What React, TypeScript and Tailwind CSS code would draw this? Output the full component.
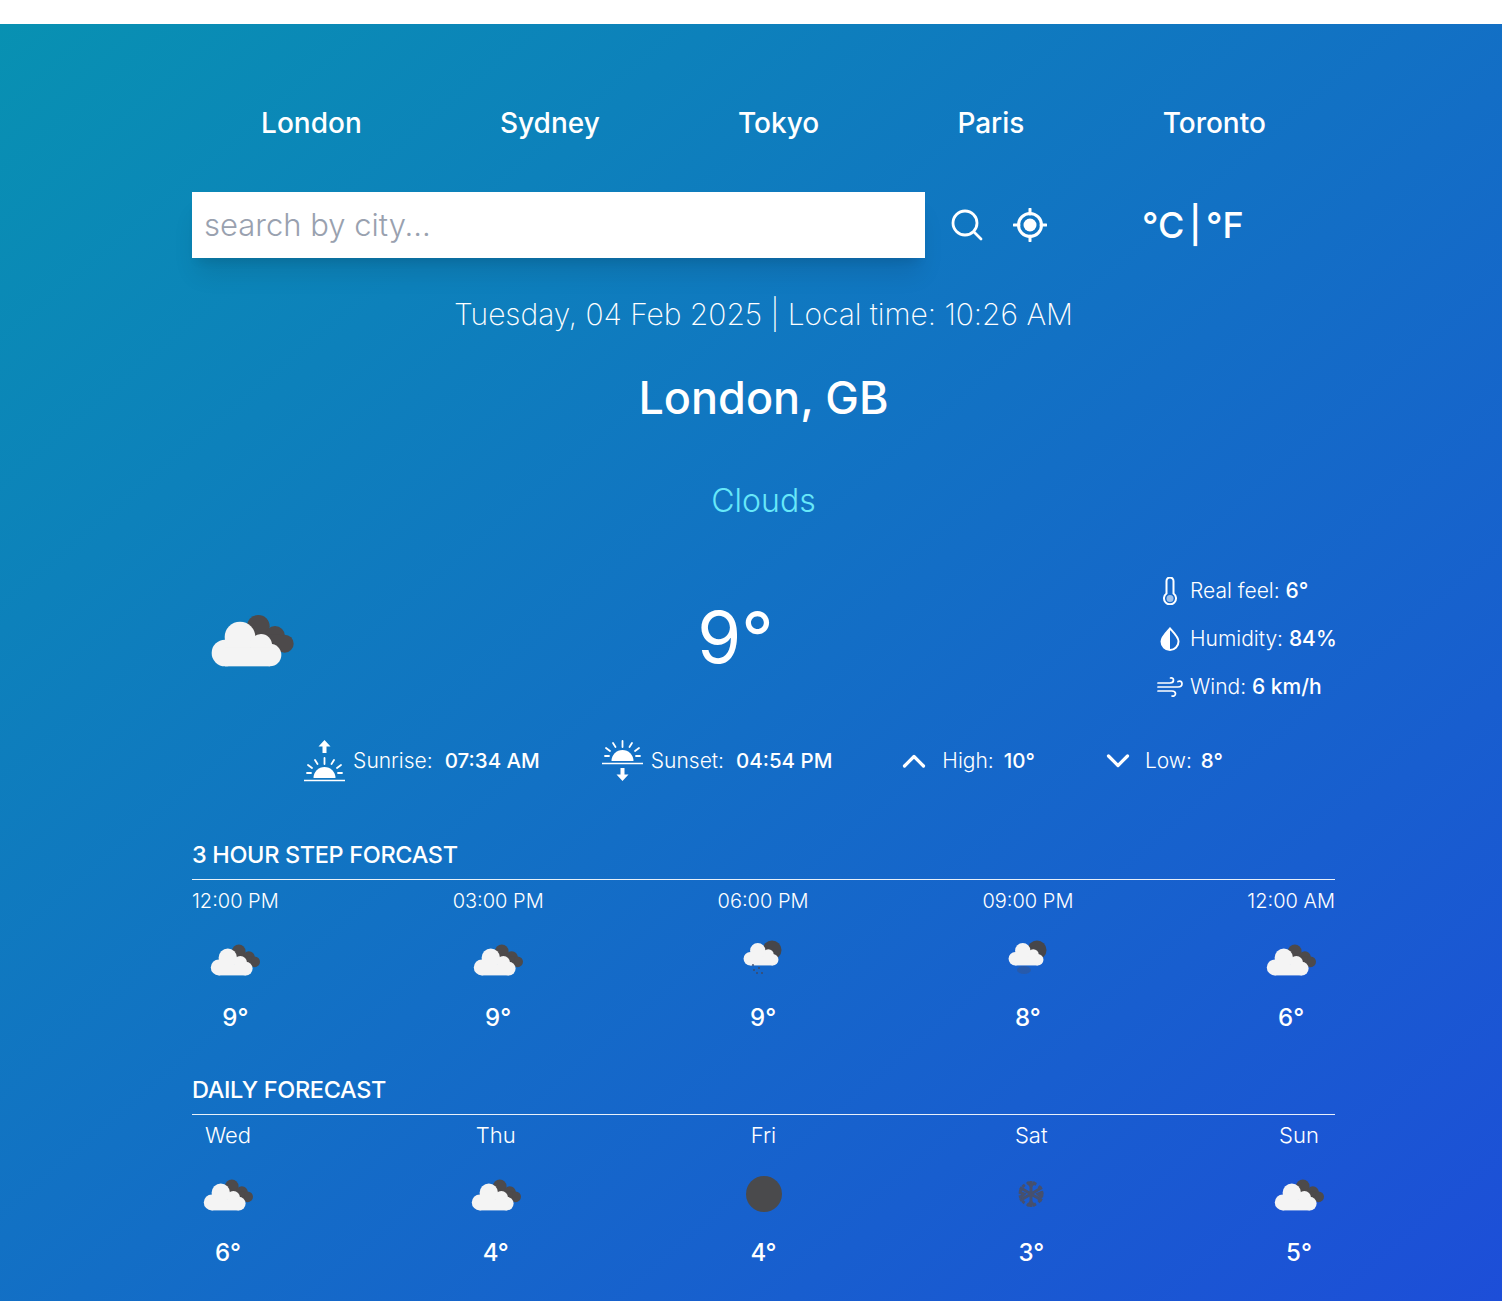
import React from "react";

const hourly = [
  { label: "12:00 PM", temp: "9°", icon: "clouds" },
  { label: "03:00 PM", temp: "9°", icon: "clouds" },
  { label: "06:00 PM", temp: "9°", icon: "snowNight" },
  { label: "09:00 PM", temp: "8°", icon: "rainNight" },
  { label: "12:00 AM", temp: "6°", icon: "clouds" },
];

const daily = [
  { label: "Wed", temp: "6°", icon: "clouds" },
  { label: "Thu", temp: "4°", icon: "clouds" },
  { label: "Fri", temp: "4°", icon: "disc" },
  { label: "Sat", temp: "3°", icon: "flake" },
  { label: "Sun", temp: "5°", icon: "clouds" },
];

const cities = ["London", "Sydney", "Tokyo", "Paris", "Toronto"];

function WhiteCloud() {
  return (
    <g fill="#f4f4f4">
      <circle cx="150" cy="138" r="46" />
      <circle cx="105" cy="186" r="40" />
      <circle cx="213" cy="162" r="33" />
      <circle cx="240" cy="192" r="34" />
      <rect x="105" y="170" width="135" height="56" />
    </g>
  );
}

function WeatherIcon({ kind, size }: { kind: string; size: number }) {
  if (kind === "disc") {
    return (
      <svg width={size} height={size} viewBox="0 0 72 72">
        <circle cx="36" cy="36" r="18" fill="#4a4a4c" />
      </svg>
    );
  }
  if (kind === "flake") {
    return (
      <svg width={size} height={size} viewBox="0 0 72 72" fill="none" stroke="#46506e" strokeWidth="3">
        <path d="M36 23v26M25 29.500l22 13M25 42.500l22-13" />
        <path d="M32 24l4 4 4-4M32 48l4-4 4 4M24 34l5 2-4 4M48 34l-5 2 4 4" />
        <circle cx="36" cy="36" r="11" strokeDasharray="3 3" />
      </svg>
    );
  }
  if (kind === "snowNight" || kind === "rainNight") {
    return (
      <svg width={size} height={size} viewBox="0 0 72 72">
        <circle cx="45" cy="27" r="9.500" fill="#46464a" />
        <g transform="translate(5.700 4.700) scale(0.167)">
          <WhiteCloud />
        </g>
        {kind === "snowNight" ? (
          <g fill="#3d4a6a">
            <circle cx="26" cy="42" r="0.900" />
            <circle cx="27" cy="47" r="1" />
            <circle cx="32" cy="45" r="1" />
            <circle cx="30" cy="50" r="1" />
            <circle cx="35" cy="50" r="1" />
          </g>
        ) : (
          <ellipse cx="32" cy="47" rx="7" ry="4" fill="#35558f" opacity="0.55" />
        )}
      </svg>
    );
  }
  return (
    <svg width={size} height={size} viewBox="6 -36 360 360">
      <g fill="#4d4a4b">
        <circle cx="205" cy="106" r="34" />
        <circle cx="255" cy="135" r="30" />
        <circle cx="284" cy="158" r="27" />
        <rect x="200" y="130" width="70" height="50" />
      </g>
      <WhiteCloud />
    </svg>
  );
}

function Thermometer() {
  return (
    <svg width="18" height="28" viewBox="0 0 18 28" fill="none" stroke="white" strokeWidth="2">
      <path d="M5.500 4a3.500 3.500 0 0 1 7 0v12.500a6 6 0 1 1-7 0z" />
      <circle cx="9" cy="21.500" r="3.500" fill="white" opacity="0.6" stroke="none" />
    </svg>
  );
}

function Droplet() {
  return (
    <svg width="20" height="24" viewBox="0 0 20 24">
      <path d="M10 1.500C6 6 1.500 10 1.500 14.500a8.500 8.500 0 0 0 17 0C18.500 10 14 6 10 1.500z" fill="none" stroke="white" strokeWidth="2" />
      <path d="M10 1.500C6 6 1.500 10 1.500 14.500a8.500 8.500 0 0 0 8.500 8.500z" fill="white" />
    </svg>
  );
}

function Wind() {
  return (
    <svg width="26" height="22" viewBox="0 0 26 22" fill="none" stroke="white" strokeWidth="1.700" strokeLinecap="round">
      <path d="M1 7h12c2.500 0 3.500-1.500 3.500-3S15 1.500 13.500 2" />
      <path d="M1 11h20c2.500 0 4-1.500 4-3.500S23 4.500 21 5.500" />
      <path d="M1 15h14c2 0 3.500 1 3.500 2.800S16.500 20.500 15 20" />
    </svg>
  );
}

function Sunrise() {
  return (
    <svg width="41" height="42" viewBox="0 0 41 42" className="shrink-0">
      <path d="M20.500 0l-6 6.500h4v6.500h4v-6.500h4z" fill="white" />
      <path d="M9.500 38a11 11 0 0 1 22 0z" fill="white" />
      <path d="M0 40.500h41" stroke="white" strokeWidth="1.600" />
      <path d="M20.500 18v6M11 20l2.500 4M30 20l-2.500 4M4 25l4 3M37 25l-4 3M3 33h4M34 33h4" stroke="white" strokeWidth="1.800" strokeLinecap="round" fill="none" />
    </svg>
  );
}

function Sunset() {
  return (
    <svg width="41" height="42" viewBox="0 0 41 42" className="shrink-0">
      <path d="M9.500 21a11 11 0 0 1 22 0z" fill="white" />
      <path d="M0 23.500h41" stroke="white" strokeWidth="1.600" />
      <path d="M20.500 1v6M11 3l2.500 4M30 3l-2.500 4M4 8l4 3M37 8l-4 3M3 16h4M34 16h4" stroke="white" strokeWidth="1.800" strokeLinecap="round" fill="none" />
      <path d="M20.500 41l-6-6.500h4v-6.500h4v6.500h4z" fill="white" />
    </svg>
  );
}

function Chevron({ up }: { up?: boolean }) {
  return (
    <svg width="24" height="16" viewBox="0 0 24 16" fill="none" stroke="white" strokeWidth="3.200" strokeLinecap="round" strokeLinejoin="round">
      <path d={up ? "M2.500 13L12 3.500 21.500 13" : "M2.500 3L12 12.500 21.500 3"} />
    </svg>
  );
}

function Forecast({
  title,
  items,
  labelClass,
}: {
  title: string;
  items: { label: string; temp: string; icon: string }[];
  labelClass: string;
}) {
  return (
    <section>
      <h2 className="text-[23.500px] leading-[32px] font-medium uppercase text-white tracking-[-0.35px]">{title}</h2>
      <hr className="mt-2 border-white/90" />
      <div className="flex justify-between mt-[4px]">
        {items.map((item) => (
          <div key={item.label} className="flex flex-col items-center min-w-[72px]">
            <p className={`${labelClass} leading-[32px] font-light text-white whitespace-nowrap`}>{item.label}</p>
            <div className="mt-[7px]">
              <WeatherIcon kind={item.icon} size={72} />
            </div>
            <p className="text-[24px] leading-[32px] font-medium text-white mt-[7px]">{item.temp}</p>
          </div>
        ))}
      </div>
    </section>
  );
}

export default function App() {
  return (
    <div className="pt-6 bg-white font-['Inter',sans-serif]">
      <main className="h-[1277px] overflow-hidden bg-linear-to-br/srgb from-[#0891b2] to-[#1d4ed8] pl-[192px] pr-[167px] pt-[79px]">
        <nav className="flex justify-around">
          {cities.map((city) => (
            <button key={city} className="text-white text-[28px] leading-[40px] font-medium">
              {city}
            </button>
          ))}
        </nav>

        <div className="flex mt-[49px] items-center">
          <div className="w-[733px] h-[66px] shrink-0 bg-white shadow-xl flex items-center px-3">
            <input
              placeholder="search by city..."
              className="w-full outline-none text-[31px] font-light text-gray-800 placeholder:text-gray-400"
            />
          </div>
          <div className="flex items-center gap-[30px] ml-[26px]">
            <svg width="32" height="32" viewBox="0 0 32 32" fill="none" stroke="white" strokeWidth="2.800" strokeLinecap="round">
              <circle cx="14" cy="14" r="12" />
              <path d="M23 23l7 7" />
            </svg>
            <svg width="34" height="34" viewBox="0 0 34 34" fill="none" stroke="white">
              <circle cx="17" cy="17" r="11.500" strokeWidth="3" />
              <circle cx="17" cy="17" r="6.500" fill="white" stroke="none" />
              <path d="M17 1v5M17 28v5M1 17h5M28 17h5" strokeWidth="3" strokeLinecap="round" />
            </svg>
          </div>
          <p className="text-white text-[36px] font-medium ml-[95px] whitespace-nowrap [word-spacing:-5px]">°C | °F</p>
        </div>

        <p className="text-center text-white text-[30px] leading-[40px] font-extralight mt-[36px] tracking-[-0.05px]">
          Tuesday, 04 Feb 2025 | Local time: 10:26 AM
        </p>
        <h1 className="text-center text-white text-[45px] leading-[56px] font-medium mt-[36px]">London, GB</h1>
        <p className="text-center text-[#67e8f9] text-[32px] leading-[40px] font-light mt-[55px]">Clouds</p>

        <div className="flex justify-between items-center mt-[53px]">
          <WeatherIcon kind="clouds" size={120} />
          <p className="text-white text-[71px] leading-[80px] font-normal ml-[2px] mb-[4px]">9°</p>
          <div className="flex flex-col w-[178px] gap-[16px] mt-[1px]">
            {[
              { icon: <Thermometer />, label: "Real feel:", value: "6°" },
              { icon: <Droplet />, label: "Humidity:", value: "84%" },
              { icon: <Wind />, label: "Wind:", value: "6 km/h" },
            ].map((row) => (
              <div key={row.label} className="flex items-center h-[32px] text-white text-[21px] font-light whitespace-nowrap">
                <span className="w-[26px] shrink-0 flex justify-center">{row.icon}</span>
                <span className="ml-[7px]">
                  {row.label} <span className="font-medium">{row.value}</span>
                </span>
              </div>
            ))}
          </div>
        </div>

        <div className="flex items-center justify-center mt-[37px] text-white text-[21px] font-light whitespace-nowrap">
          <Sunrise />
          <span className="ml-[8px]">Sunrise:</span>
          <span className="font-medium text-[20.500px] ml-[12px]">07:34 AM</span>
          <span className="ml-[62px]"><Sunset /></span>
          <span className="ml-[8px]">Sunset:</span>
          <span className="font-medium text-[20.500px] ml-[12px]">04:54 PM</span>
          <span className="ml-[70px]"><Chevron up /></span>
          <span className="ml-[16px]">High:</span>
          <span className="font-medium text-[20.500px] ml-[10px]">10°</span>
          <span className="ml-[71px]"><Chevron /></span>
          <span className="ml-[15px]">Low:</span>
          <span className="font-medium text-[20.500px] ml-[9px]">8°</span>
        </div>

        <div className="mt-[57px]">
          <Forecast title="3 hour step forcast" items={hourly} labelClass="text-[20px] pt-px mb-[-1px]" />
        </div>
        <div className="mt-[40px]">
          <Forecast title="Daily forecast" items={daily} labelClass="text-[22px]" />
        </div>
      </main>
    </div>
  );
}
